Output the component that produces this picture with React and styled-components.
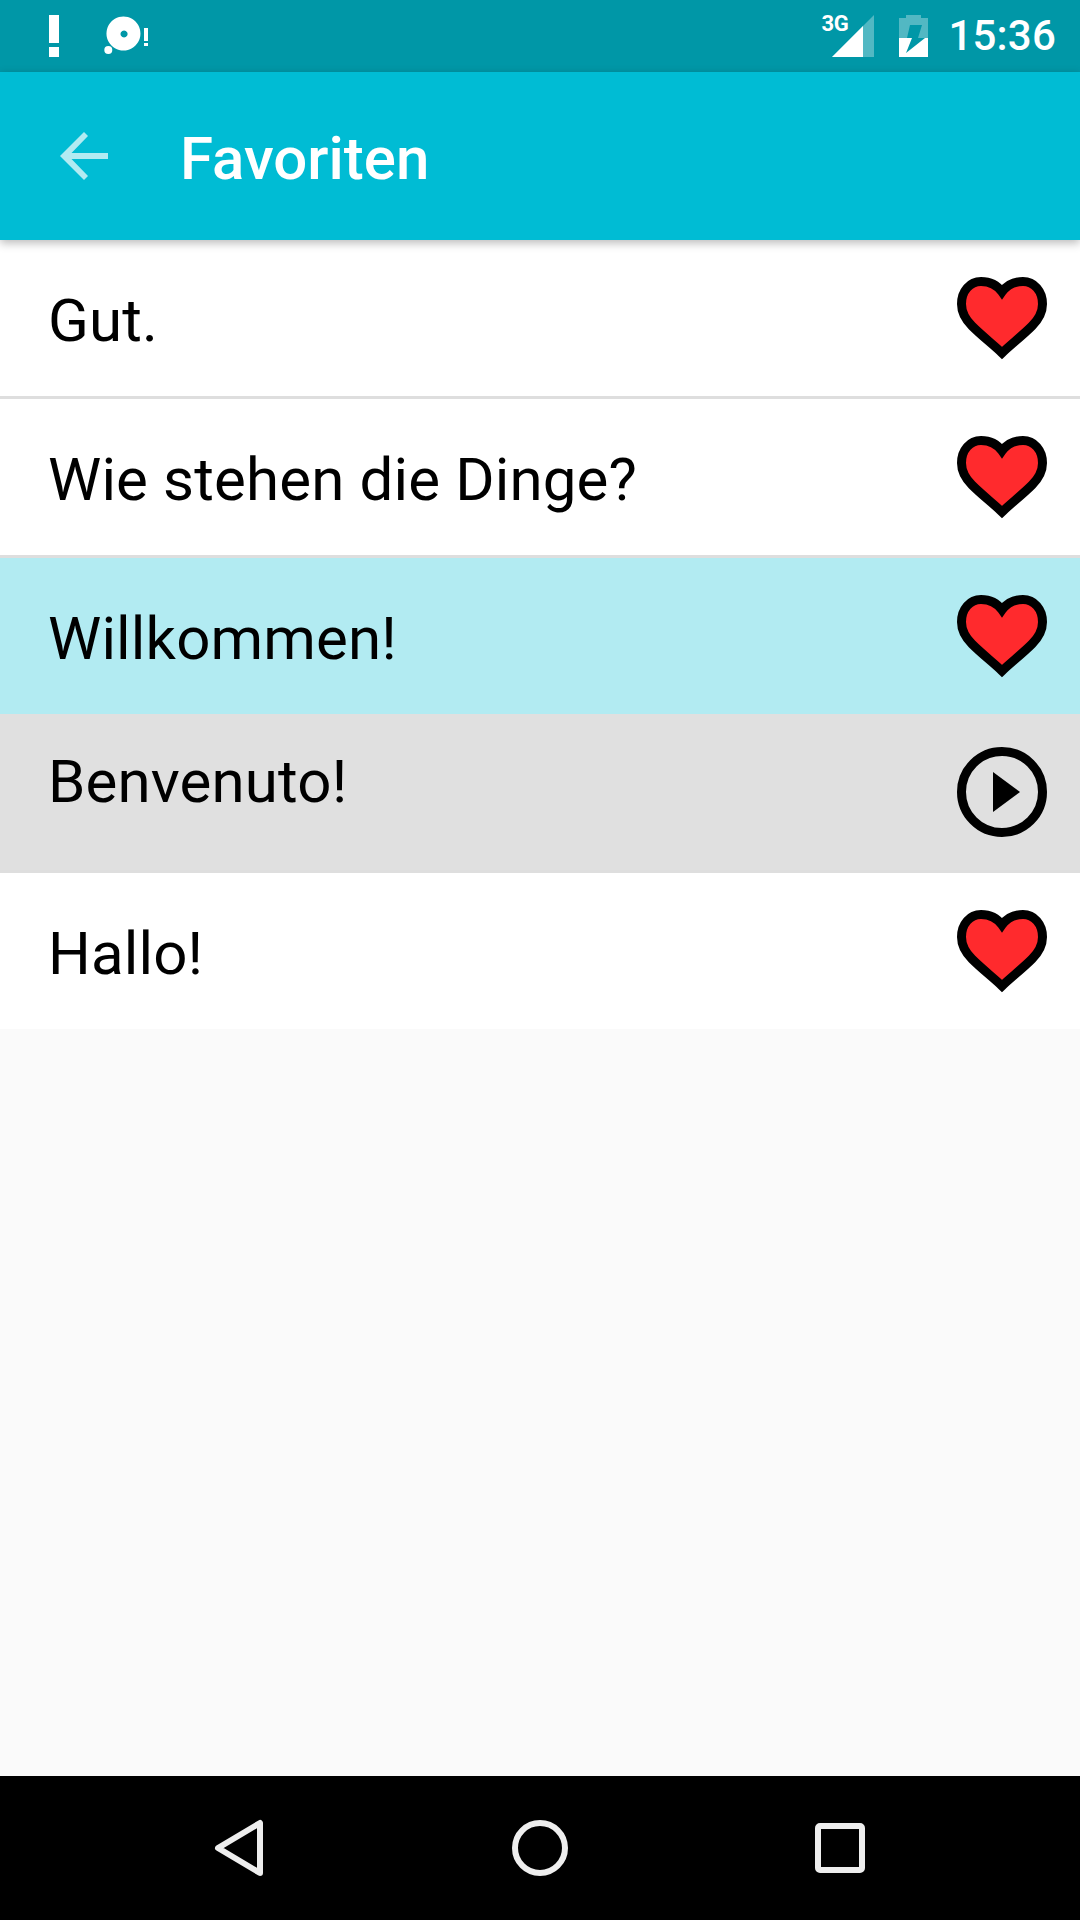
import React from 'react';
import styled, { createGlobalStyle } from 'styled-components';

const Global = createGlobalStyle`
  html, body { margin: 0; padding: 0; background: #fafafa; }
  * { box-sizing: border-box; }
`;

const Screen = styled.div`
  width: 1080px;
  height: 1920px;
  display: flex;
  flex-direction: column;
  font-family: Roboto, sans-serif;
  background: #fafafa;
  overflow: hidden;
`;

const StatusBar = styled.div`
  height: 72px;
  flex: none;
  background: #0097a7;
  display: flex;
  align-items: center;
  justify-content: space-between;
  padding: 0 24px 0 49px;
`;

const StatusGroup = styled.div`
  display: flex;
  align-items: center;
  gap: ${(p) => p.$gap}px;
`;

const SignalWrap = styled.div`
  position: relative;
  margin-right: 2px;
`;

const NetLabel = styled.span`
  position: absolute;
  left: 0;
  top: -2px;
  color: #fff;
  font-size: 22px;
  font-weight: 700;
  line-height: 24px;
  letter-spacing: -0.3px;
`;

const Clock = styled.span`
  color: #fff;
  font-size: 42px;
  font-weight: 500;
  line-height: 72px;
  letter-spacing: 0.2px;
  margin-left: -2px;
`;

const Toolbar = styled.div`
  height: 168px;
  flex: none;
  background: #00bcd4;
  display: flex;
  align-items: center;
  padding-left: 60px;
  box-shadow: 0 3px 9px rgba(0, 0, 0, 0.28);
  position: relative;
  z-index: 1;
`;

const Title = styled.h1`
  margin: 0 0 0 72px;
  padding-top: 5px;
  color: #fff;
  font-size: 60px;
  font-weight: 500;
  line-height: 1;
`;

const List = styled.div`
  flex: 1;
  display: flex;
  flex-direction: column;
`;

const bgs = { plain: '#ffffff', active: '#b2ebf2', pressed: '#e0e0e0' };

const Row = styled.div`
  height: ${(p) => (p.$bare ? 156 : 159)}px;
  flex: none;
  display: flex;
  align-items: center;
  justify-content: space-between;
  padding: 0 33px 0 48px;
  background: ${(p) => bgs[p.$kind]};
  border-bottom: ${(p) => (p.$bare ? 'none' : '3px solid #dedede')};
`;

const Phrase = styled.span`
  font-size: 60px;
  line-height: 1;
  letter-spacing: 0.15px;
  color: #000;
  padding: ${(p) => (p.$raised ? '0 0 20px' : '5px 0 0')};
`;

const NavBar = styled.div`
  height: 144px;
  flex: none;
  background: #000;
  display: flex;
  align-items: center;
  justify-content: space-between;
  padding: 0 215px 0 214px;
`;

const Svg = styled.svg`
  display: block;
  flex: none;
`;

const Heart = () => (
  <Svg width="90" height="84" viewBox="0 -1 90 84">
    <path
      d="M45 76 C38 69 25 59 15 49 C8 42 4.5 35 4.5 27 C4.5 14 13 4.5 24 4.5 C33 4.5 40 8 45 15 C50 8 57 4.5 66 4.5 C77 4.5 85.5 14 85.5 27 C85.5 35 82 42 75 49 C65 59 52 69 45 76 Z"
      fill="#ff2a2d"
      stroke="#000"
      strokeWidth="9"
      strokeLinejoin="miter"
    />
  </Svg>
);

const Play = () => (
  <Svg width="90" height="90" viewBox="0 0 90 90">
    <circle cx="45" cy="45" r="40.5" fill="none" stroke="#000" strokeWidth="9" />
    <path d="M36 25 L63 45 L36 65 Z" fill="#000" />
  </Svg>
);

const BackArrow = () => (
  <Svg width="48" height="48" viewBox="0 0 48 48">
    <path d="M48 21 H11.5 L28 4 L24 0 L0 24 L24 48 L28 44 L11.5 27 H48 Z" fill="#b2ebf2" />
  </Svg>
);

const Alert = () => (
  <Svg width="10" height="42" viewBox="0 0 10 42">
    <path d="M0 0 H10 V28 H0 Z M0 32 H10 V42 H0 Z" fill="#fff" />
  </Svg>
);

const DiscAlert = () => (
  <Svg width="44" height="40" viewBox="0 0 44 40">
    <path
      fillRule="evenodd"
      d="M19.5 0.5 A17 17 0 1 1 19.4 0.5 Z M20 14.5 A3.5 3.5 0 1 0 20.1 14.5 Z"
      fill="#fff"
    />
    <circle cx="4.3" cy="34" r="4" fill="#fff" />
    <path d="M40 12 H44 V25 H40 Z M40 27 H44 V30 H40 Z" fill="#fff" />
  </Svg>
);

const Signal = () => (
  <Svg width="54" height="44" viewBox="0 0 54 44">
    <path d="M11 43 L53 1 V43 Z" fill="#fff" fillOpacity="0.32" />
    <path d="M11 43 L42 12 V43 Z" fill="#fff" />
  </Svg>
);

const Battery = () => (
  <Svg width="29" height="42" viewBox="0 0 29 42">
    <path d="M7 0 H22 V3 H29 V23 H0 V3 H7 Z" fill="#fff" fillOpacity="0.32" />
    <path d="M0 23 H29 V42 H0 Z" fill="#fff" />
    <path d="M11 10 H23 L19 23 H26 L7 38 L13 23 H8 Z" fill="#0097a7" />
  </Svg>
);

const NavBack = () => (
  <Svg width="50" height="58" viewBox="0 0 50 58">
    <path d="M46 4 V54 L4 29 Z" fill="none" stroke="#eeeeee" strokeWidth="6" strokeLinejoin="round" />
  </Svg>
);

const NavHome = () => (
  <Svg width="56" height="56" viewBox="0 0 56 56">
    <circle cx="28" cy="28" r="25" fill="none" stroke="#eeeeee" strokeWidth="6" />
  </Svg>
);

const NavRecent = () => (
  <Svg width="50" height="50" viewBox="0 0 50 50">
    <rect x="3" y="3" width="44" height="44" rx="2" fill="none" stroke="#eeeeee" strokeWidth="6" />
  </Svg>
);

const phrases = [
  { text: 'Gut.', kind: 'plain' },
  { text: 'Wie stehen die Dinge?', kind: 'plain' },
  { text: 'Willkommen!', kind: 'active', bare: true },
  { text: 'Benvenuto!', kind: 'pressed', playing: true },
  { text: 'Hallo!', kind: 'plain', bare: true },
];

export default function App() {
  return (
    <Screen>
      <Global />
      <StatusBar>
        <StatusGroup $gap={45}>
          <Alert />
          <DiscAlert />
        </StatusGroup>
        <StatusGroup $gap={22}>
          <SignalWrap>
            <NetLabel>3G</NetLabel>
            <Signal />
          </SignalWrap>
          <Battery />
          <Clock>15:36</Clock>
        </StatusGroup>
      </StatusBar>
      <Toolbar>
        <BackArrow />
        <Title>Favoriten</Title>
      </Toolbar>
      <List>
        {phrases.map((p) => (
          <Row key={p.text} $kind={p.kind} $bare={p.bare}>
            <Phrase $raised={p.playing}>{p.text}</Phrase>
            {p.playing ? <Play /> : <Heart />}
          </Row>
        ))}
      </List>
      <NavBar>
        <NavBack />
        <NavHome />
        <NavRecent />
      </NavBar>
    </Screen>
  );
}
